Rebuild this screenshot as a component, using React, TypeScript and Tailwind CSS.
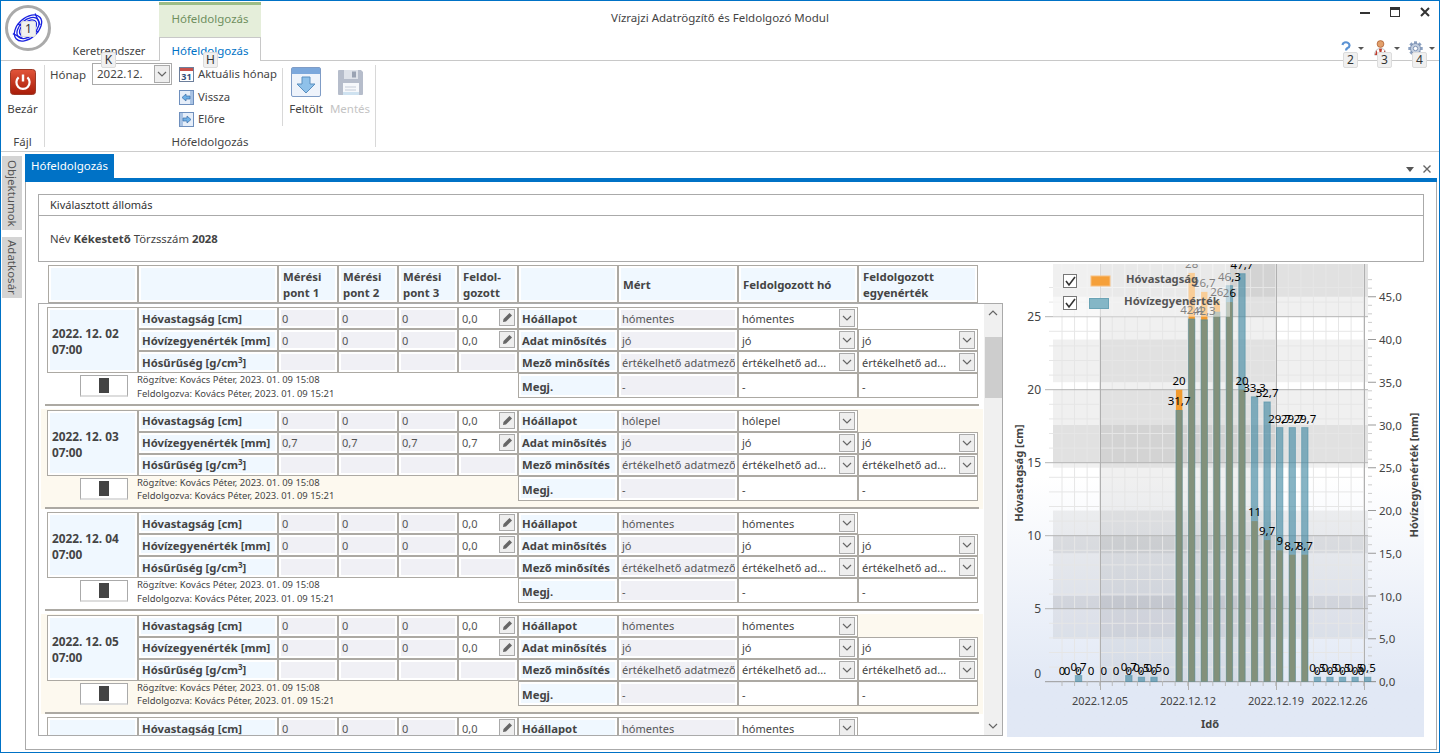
import React from 'react';

const F = "font-['Open_Sans',sans-serif]";

function KeyTip({ t, cls }: { t: string; cls: string }) {
  return (
    <div className={`absolute z-20 w-[15px] h-[16px] bg-[#f0f0f0] border border-[#dcdcdc] rounded-[2px] flex items-center justify-center text-[12px] leading-none text-[#333] ${cls}`}>
      {t}
    </div>
  );
}

function Caret() {
  return <div className="w-0 h-0 border-l-[3px] border-r-[3px] border-t-[3px] border-l-transparent border-r-transparent border-t-[#555]" />;
}

function Chevron({ w = 10 }: { w?: number }) {
  return (
    <svg width={w} height={6} viewBox="0 0 10 6">
      <path d="M1 1 L5 5 L9 1" fill="none" stroke="#666" strokeWidth="1.2" />
    </svg>
  );
}

function Logo() {
  return (
    <svg width="46" height="46" viewBox="0 0 46 46">
      <circle cx="23" cy="23" r="21.5" fill="#fff" stroke="#aaaaaa" strokeWidth="3" />
      <g fill="none" stroke="#1a22e0" strokeWidth="1.3" transform="rotate(-42 23 23)">
        <ellipse cx="23" cy="23" rx="16" ry="10" />
        <ellipse cx="23" cy="23" rx="13" ry="8" />
        <ellipse cx="23" cy="23" rx="10" ry="6" />
        <path d="M8 17 L12 27 M38 17 L34 29 M18 13 L20 18 M28 33 L26 28" />
      </g>
    </svg>
  );
}

function PowerIcon() {
  return (
    <svg width="26" height="26" viewBox="0 0 26 26">
      <defs>
        <linearGradient id="pw" x1="0" y1="0" x2="0" y2="1">
          <stop offset="0" stopColor="#e2553a" />
          <stop offset="1" stopColor="#a81c08" />
        </linearGradient>
      </defs>
      <rect x="0.5" y="0.5" width="25" height="25" rx="3" fill="url(#pw)" stroke="#9c3a28" />
      <path d="M8.6 8.4 A6.6 6.6 0 1 0 17.4 8.4" fill="none" stroke="#fff" strokeWidth="2.2" />
      <path d="M13 5.5 V12.5" stroke="#fff" strokeWidth="2.4" />
    </svg>
  );
}

function CalendarIcon() {
  return (
    <svg width="15" height="15" viewBox="0 0 15 15">
      <rect x="0.5" y="0.5" width="14" height="14" fill="#fff" stroke="#6d7f9b" />
      <rect x="1" y="1" width="13" height="3" fill="#c9504a" />
      <text x="7.5" y="12.5" textAnchor="middle" fontSize="9" fontWeight="700" fill="#33507a">31</text>
    </svg>
  );
}

function ArrowBox({ dir }: { dir: 'l' | 'r' }) {
  return (
    <svg width="15" height="15" viewBox="0 0 15 15">
      <rect x="0.5" y="0.5" width="14" height="14" fill="#e6eef9" stroke="#6e8fbd" />
      {dir === 'l' ? (
        <>
          <rect x="11" y="1" width="3" height="13" fill="#a9c3e4" />
          <path d="M3 7.5 L7 4 V6 H11 V9 H7 V11 Z" fill="#6fb0e6" stroke="#3b6fa8" strokeWidth="0.7" />
        </>
      ) : (
        <>
          <rect x="1" y="1" width="3" height="13" fill="#a9c3e4" />
          <path d="M12 7.5 L8 4 V6 H4 V9 H8 V11 Z" fill="#6fb0e6" stroke="#3b6fa8" strokeWidth="0.7" />
        </>
      )}
    </svg>
  );
}

function UploadIcon() {
  return (
    <svg width="30" height="30" viewBox="0 0 30 30">
      <rect x="0.5" y="0.5" width="29" height="29" rx="1.5" fill="#eef3fb" stroke="#7f9cc6" />
      <rect x="1" y="1" width="28" height="6" fill="#7ca8dc" />
      <path d="M11 10 H19 V17 H24 L15 26 L6 17 H11 Z" fill="#8fc1ea" stroke="#5b8fbf" strokeWidth="1" />
    </svg>
  );
}

function SaveIcon() {
  return (
    <svg width="27" height="27" viewBox="0 0 27 27">
      <path d="M1 2 a1 1 0 0 1 1 -1 H24 l2 2 V25 a1 1 0 0 1 -1 1 H2 a1 1 0 0 1 -1 -1 Z" fill="#b6bdcb" />
      <rect x="7" y="1" width="14" height="9" fill="#dfe3ea" />
      <rect x="15" y="2.5" width="4" height="6" fill="#9aa3b3" />
      <rect x="6" y="14" width="16" height="12" fill="#f6f8fb" />
      <path d="M8 18 H19 M8 21 H19" stroke="#c5ccd8" />
      <rect x="6" y="23" width="16" height="3" fill="#cfe2f0" />
    </svg>
  );
}

function HelpIcon() {
  return (
    <svg width="12" height="14" viewBox="0 0 12 14">
      <path d="M2.5 4 A3.5 3 0 1 1 7.5 7 Q6 8 6 9.5" fill="none" stroke="#5b93d4" strokeWidth="2.2" />
      <circle cx="6" cy="12.4" r="1.4" fill="#5b93d4" />
    </svg>
  );
}

function PersonIcon() {
  return (
    <svg width="13" height="16" viewBox="0 0 13 16">
      <circle cx="6.5" cy="4" r="3.4" fill="#e2a06b" stroke="#a8562a" strokeWidth="0.7" />
      <path d="M0.5 15 Q1 8.5 6.5 8.5 Q12 8.5 12.5 15 Z" fill="#fff" stroke="#999" strokeWidth="0.6" />
      <path d="M5 8.7 H8 L7 15 H6 Z" fill="#c0392b" />
      <path d="M1 15 L2.5 10 L4 15 Z M12 15 L10.5 10 L9 15 Z" fill="#c0392b" />
    </svg>
  );
}

function GearIcon() {
  const teeth = [0, 45, 90, 135, 180, 225, 270, 315];
  return (
    <svg width="15" height="15" viewBox="0 0 15 15">
      {teeth.map((a) => (
        <rect key={a} x="6" y="0.3" width="3" height="3" fill="#8aa0c0" transform={`rotate(${a} 7.5 7.5)`} />
      ))}
      <circle cx="7.5" cy="7.5" r="5" fill="#c3cfe0" stroke="#7f93b3" />
      <circle cx="7.5" cy="7.5" r="2.2" fill="#fff" stroke="#7f93b3" />
    </svg>
  );
}

function PencilBtn() {
  return (
    <div className="absolute right-[2px] top-[1px] w-[16px] h-[17px] bg-[#eeeeee] border border-[#aaaaaa] flex items-center justify-center">
      <svg width="11" height="11" viewBox="0 0 11 11">
        <path d="M7.5 1 L10 3.5 L4 9.5 L1 10 L1.5 7 Z" fill="#666" />
      </svg>
    </div>
  );
}

const cell = 'border border-[#aca9a3] bg-white p-[2px] min-w-0 overflow-hidden';

function Label({ children, cls = '', pt = 'pt-[2px]' }: { children: React.ReactNode; cls?: string; pt?: string }) {
  return (
    <div className={`${cell} ${cls}`}>
      <div className={`h-full bg-[#f0f8ff] pl-[1px] ${pt} flex items-center font-bold text-[#444] text-[11.3px] whitespace-nowrap`}>{children}</div>
    </div>
  );
}

function Val({ v, pt = 'pt-[2px]' }: { v?: string; pt?: string }) {
  return (
    <div className={cell}>
      <div className={`h-full bg-[#f0f0f5] pl-[1px] ${pt} flex items-center text-[#555] whitespace-nowrap overflow-hidden`}>{v}</div>
    </div>
  );
}

function Proc({ v }: { v: string }) {
  return (
    <div className={`${cell} relative`}>
      <div className="h-full pl-[1px] pt-[2px] flex items-center text-[#555]">{v}</div>
      <PencilBtn />
    </div>
  );
}

function Combo({ v }: { v: string }) {
  return (
    <div className={`${cell} relative`}>
      <div className="h-full pl-[1px] pt-[2px] flex items-center text-[#444] whitespace-nowrap">{v}</div>
      <div className="absolute right-[2px] top-[1px] w-[16px] h-[18px] bg-[#eeeeee] border border-[#aaaaaa] flex items-center justify-center">
        <Chevron />
      </div>
    </div>
  );
}

function Plain({ v }: { v: string }) {
  return (
    <div className={cell}>
      <div className="h-full pl-[1px] pt-[4px] flex items-center text-[#444]">{v}</div>
    </div>
  );
}

const rows = [
  { d: '2022. 12. 02', s: 'hómentes', w: '0', p: '0,0' },
  { d: '2022. 12. 03', s: 'hólepel', w: '0,7', p: '0,7' },
  { d: '2022. 12. 04', s: 'hómentes', w: '0', p: '0,0' },
  { d: '2022. 12. 05', s: 'hómentes', w: '0', p: '0,0' },
  { d: '2022. 12. 06', s: 'hómentes', w: '0', p: '0,0' },
];

function DataRow({ r, tint }: { r: (typeof rows)[number]; tint: boolean }) {
  return (
    <div className={`ml-[2px] mr-[1px] mb-[2.5px] h-[100px] pt-[1px] shrink-0 ${tint ? 'bg-[#fdf9ef]' : ''}`}>
      <div className="ml-[6px] w-[931px] grid grid-cols-[91px_140px_60px_60px_60px_60px_100px_120px_120px_120px] grid-rows-[22px_22px_22px_25px]">
        <div className={`${cell} row-span-3`}>
          <div className="h-full bg-[#f0f8ff] pl-[2px] pt-[2px] flex items-center font-bold text-[11.8px] text-[#444] leading-[16px]">
            <div>{r.d}<br />07:00</div>
          </div>
        </div>
        <Label>Hóvastagság [cm]</Label>
        <Val v="0" /><Val v="0" /><Val v="0" />
        <Proc v="0,0" />
        <Label>Hóállapot</Label>
        <Val v={r.s} />
        <Combo v={r.s} />
        <div />

        <Label>Hóvízegyenérték [mm]</Label>
        <Val v={r.w} /><Val v={r.w} /><Val v={r.w} />
        <Proc v={r.p} />
        <Label>Adat minősítés</Label>
        <Val v="jó" />
        <Combo v="jó" />
        <Combo v="jó" />

        <Label><span>Hósűrűség [g/cm<sup className="text-[8px]">3</sup>]</span></Label>
        <Val /><Val /><Val /><Val />
        <Label>Mező minősítés</Label>
        <Val v="értékelhető adatmező" />
        <Combo v="értékelhető ad..." />
        <Combo v="értékelhető ad..." />

        <div className="pt-[2px] pl-[33px]">
          <div className="w-[48px] h-[22px] bg-white border border-[#aaaaaa] border-b-[2px] border-b-[#dddddd] flex justify-center pt-[2px]">
            <div className="w-[10px] h-[15px] bg-[#444]" />
          </div>
        </div>
        <div className="col-span-5 -ml-[1px] text-[9.45px] leading-[13.5px] text-[#444] whitespace-nowrap">
          <div>Rögzítve: Kovács Péter, 2023. 01. 09 15:08</div>
          <div>Feldolgozva: Kovács Péter, 2023. 01. 09 15:21</div>
        </div>
        <Label pt="pt-[4px]">Megj.</Label>
        <Val v="-" pt="pt-[4px]" />
        <Plain v="-" />
        <Plain v="-" />
      </div>
      <div className="mt-[6px] mx-[4px] h-[2px] bg-[#aca9a3]" />
    </div>
  );
}

function HeadCell({ children, cls = '' }: { children?: React.ReactNode; cls?: string }) {
  return (
    <div className={`${cell} ${cls}`}>
      <div className="h-full bg-[#f0f8ff] pl-[2px] pt-[2px] flex items-center font-bold text-[11.4px] text-[#444] leading-[16px]">{children}</div>
    </div>
  );
}

function Chart() {
  const yL = (v: number) => 681.7 - 14.6 * v;
  const yR = (v: number) => 681.5 - 8.55 * v;
  const xD = (d: number) => 1103.7 + 12.57 * (d - 5);
  const PL = 1053;
  const PR = 1364;
  const band = 'rgba(0,0,0,0.06)';
  const orange = [
    [11, 20], [12, 28], [13, 26.7], [14, 26.1], [15, 26], [16, 20], [17, 11], [18, 9.7], [19, 9], [20, 8.7], [21, 8.7],
  ];
  const orangeL = ['20', '28', '26,7', '26', '26', '20', '11', '9,7', '9', '8,7', '8,7'];
  const blue = [
    [3, 0.7], [7, 0.7], [8, 0.5], [9, 0.5],
    [11, 31.7], [12, 42.4], [13, 42.3], [14, 43.2], [15, 46.3], [16, 47.7], [17, 33.3], [18, 32.7], [19, 29.7], [20, 29.7], [21, 29.7],
    [22, 0.5], [23, 0.5], [24, 0.5], [25, 0.5], [26, 0.5],
  ];
  const blueL: Record<number, string> = {
    3: '0,7', 7: '0,7', 8: '0,5', 9: '0,5', 11: '31,7', 12: '42,4', 13: '42,3', 15: '46,3', 16: '47,7', 17: '33,3', 18: '32,7',
    19: '29,7', 20: '29,7', 21: '29,7', 22: '0,5', 23: '0,5', 24: '0,5', 25: '0,5', 26: '0,5',
  };
  const zeros = [1062, 1067, 1078.6, 1091, 1103.7, 1116, 1128.8, 1141, 1154, 1166, 1317.4, 1330, 1342.5, 1355, 1361];
  const days = Array.from({ length: 25 }, (_, i) => 1062 + 12.57 * i);
  return (
    <div className="w-[417px] h-[473px] shrink-0 bg-linear-to-b from-white from-[45%] to-[#e1e8f5] to-[90%]">
      <svg width="417" height="473" viewBox="1007 264 417 473" className="block">
        {[45, 35, 25, 15, 5].map((v) => (
          <rect key={v} x={PL} y={yR(v + 5)} width={PR + 4 - PL} height={yR(v) - yR(v + 5)} fill={band} />
        ))}
        {[25, 15, 5].map((v) => (
          <rect key={v} x={PL} y={yL(v + 5)} width={PR + 4 - PL} height={yL(v) - yL(v + 5)} fill={band} />
        ))}
        <rect x={1100} y={264} width={176} height={417.5} fill={band} />
        {Array.from({ length: 28 }, (_, i) => i).filter((v) => v % 5 !== 0).map((v) => (
          <path key={v} d={`M1049 ${yL(v)} H${PR}`} stroke="#e6e6e6" />
        ))}
        {days.map((x, i) => (
          <path key={i} d={`M${x} 264 V681`} stroke="#e6e6e6" />
        ))}
        {[5, 10, 15, 20, 25].map((v) => (
          <path key={v} d={`M1045 ${yL(v)} H1368`} stroke="#b4b4b4" />
        ))}
        <path d="M1100.5 264 V690 M1276.5 264 V690 M1188.5 681 V690 M1364.5 264 V690" stroke="#b0b0b0" />
        <path d={`M1045 ${yL(0)} H1376`} stroke="#999" />
        {days.map((x, i) => (
          <path key={i} d={`M${x} 681 V686`} stroke="#bbb" />
        ))}
        {Array.from({ length: 10 }, (_, i) => i * 5).map((v) => (
          <g key={v}>
            <path d={`M1368 ${yR(v)} H1376`} stroke="#999" />
            <text x="1379" y={yR(v) + 4.5} fontSize="11.5" fill="#444">{`${v},0`}</text>
          </g>
        ))}
        {Array.from({ length: 48 }, (_, i) => i).filter((v) => v % 5 !== 0).map((v) => (
          <path key={v} d={`M1368 ${yR(v)} H1372`} stroke="#ccc" />
        ))}
        {[0, 5, 10, 15, 20, 25].map((v) => (
          <text key={v} x="1041" y={yL(v) + (v === 0 ? -4 : 4.5)} textAnchor="end" fontSize="12" fill="#444">{v}</text>
        ))}
        {orange.map(([d, v]) => (
          <rect key={d} x={xD(d) - 3.2} y={yL(v)} width={6.4} height={yL(0) - yL(v)} fill="#f29b2f" />
        ))}
        {blue.map(([d, v]) => (
          <rect key={d} x={xD(d) - 3.2} y={yR(v)} width={6.4} height={yR(0) - yR(v)} fill="rgba(70,140,165,0.65)" stroke="rgba(70,140,165,0.5)" />
        ))}
        {zeros.map((x, i) => (
          <text key={i} x={x} y={675} textAnchor="middle" fontSize="11.5" fill="#000">0</text>
        ))}
        {orange.map(([d, v], i) => (
          <text key={d} x={xD(d)} y={yL(v) - 5} textAnchor="middle" fontSize="11.5" fill="#000">{orangeL[i]}</text>
        ))}
        {Object.entries(blueL).map(([d, l]) => {
          const dn = Number(d);
          const v = blue.find((b) => b[0] === dn)![1];
          return (
            <text key={d} x={xD(dn)} y={yR(v) - 5} textAnchor="middle" fontSize="11.5" fill="#000">{l}</text>
          );
        })}
        <rect x={PL} y={264} width={177} height={52.7} fill="rgba(255,255,255,0.5)" />
        <rect x="1063.5" y="274.5" width="13" height="13" fill="#fff" stroke="#777" />
        <path d="M1066 281 L1069 285 L1075 277" fill="none" stroke="#333" strokeWidth="1.6" />
        <rect x="1091" y="276" width="19" height="10" fill="#f5a03a" stroke="#f8c080" />
        <text x="1126" y="283" fontSize="11.2" fontWeight="700" fill="#555">Hóvastagság</text>
        <rect x="1063.5" y="296.5" width="13" height="13" fill="#fff" stroke="#777" />
        <path d="M1066 303 L1069 307 L1075 299" fill="none" stroke="#333" strokeWidth="1.6" />
        <rect x="1089.5" y="298.5" width="19" height="10" fill="#84b6c6" stroke="#6aa3b5" />
        <text x="1124" y="305" fontSize="11.3" fontWeight="700" fill="#555">Hóvízegyenérték</text>
        {[1100, 1188, 1276, 1339.5].map((x, i) => (
          <text key={x} x={x} y={705} textAnchor="middle" fontSize="11" fill="#444">{['2022.12.05', '2022.12.12', '2022.12.19', '2022.12.26'][i]}</text>
        ))}
        <text x="1210" y="728" textAnchor="middle" fontSize="11" fontWeight="700" fill="#444">Idő</text>
        <text transform="translate(1023 473) rotate(-90)" textAnchor="middle" fontSize="11" fontWeight="700" fill="#444">Hóvastagság [cm]</text>
        <text transform="translate(1418 475) rotate(-90)" textAnchor="middle" fontSize="11" fontWeight="700" fill="#444">Hóvízegyenérték [mm]</text>
      </svg>
    </div>
  );
}

export default function App() {
  return (
    <div className={`${F} relative w-[1440px] h-[753px] border border-[#0072c6] bg-white text-[11px] text-[#444] overflow-hidden flex flex-col`}>
      {/* title + tabs */}
      <div className="h-[60px] shrink-0 border-b border-[#c8c8c8] flex relative">
        <div className="w-[260px] shrink-0 flex">
          <div className="w-[58px] pt-[4px] pl-[4px] relative">
            <Logo />
          </div>
          <div className="w-[100px] flex items-end justify-center text-[11px] leading-[18px]">Keretrendszer</div>
          <div className="w-[102px] flex flex-col">
            <div className="mt-[1px] h-[36px] bg-[#e5eeda] border-t-[3px] border-[#9dbd87] pt-[5px] text-center text-[#6f8f5e] text-[11.5px]">Hófeldolgozás</div>
            <div className="h-[24px] -mb-[1px] bg-white border border-b-0 border-[#c8c8c8] pt-[2px] flex items-center justify-center text-[#0072c6] text-[11.5px] relative z-10">Hófeldolgozás</div>
          </div>
        </div>
        <div className="flex-1 text-center pt-[8px] text-[11.5px] leading-[18px]">Vízrajzi Adatrögzítő és Feldolgozó Modul</div>
        <div className="w-[260px] shrink-0 flex flex-col items-end pr-[4px]">
          <div className="flex items-center h-[14px] mt-[4px] pr-[5px]">
            <div className="w-[10px] h-[2px] bg-[#333] mt-[1px] mr-px" />
            <div className="ml-[19px] w-[10px] h-[10px] border border-[#333] border-t-[3px]" />
            <svg className="ml-[20px]" width="10" height="10" viewBox="0 0 10 10"><path d="M1 1 L9 9 M9 1 L1 9" stroke="#333" strokeWidth="2" /></svg>
          </div>
          <div className="flex items-center mt-[21px] h-[16px]">
            <HelpIcon />
            <div className="ml-[6px] mr-[10px]"><Caret /></div>
            <PersonIcon />
            <div className="ml-[7px] mr-[8px]"><Caret /></div>
            <GearIcon />
            <div className="ml-[6px]"><Caret /></div>
          </div>
        </div>
      </div>
      <KeyTip t="1" cls="left-[20px] top-[20px]" />
      <KeyTip t="K" cls="left-[100px] top-[51px]" />
      <KeyTip t="H" cls="left-[202px] top-[51px]" />
      <KeyTip t="2" cls="left-[1342px] top-[51px]" />
      <KeyTip t="3" cls="left-[1376px] top-[51px]" />
      <KeyTip t="4" cls="left-[1411px] top-[51px]" />

      {/* ribbon */}
      <div className="h-[91px] shrink-0 border-b border-[#cccccc] pt-[4px] flex text-[11.5px]">
        <div className="w-[44px] h-[82px] border-r border-[#d8d8d8] flex flex-col items-center">
          <div className="mt-[4px] h-[26px]"><PowerIcon /></div>
          <div className="mt-[6px] leading-[16px]">Bezár</div>
          <div className="mt-auto -mb-[2px] leading-[14px]">Fájl</div>
        </div>
        <div className="w-[331px] h-[82px] border-r border-[#d8d8d8] flex flex-col">
          <div className="flex h-[68px]">
            <div className="w-[47px] pl-[5px] -mt-[1px] leading-[22px]">Hónap</div>
            <div className="w-[80px] h-[22px] -mt-[2px] border border-[#aaaaaa] pl-[4px] flex items-center justify-between pr-[1px]">
              <span>2022.12.</span>
              <div className="w-[16px] h-[18px] bg-[#eeeeee] border border-[#aaaaaa] flex items-center justify-center"><Chevron /></div>
            </div>
            <div className="ml-[7px] w-[103px] -mt-[2px] flex flex-col text-[11.3px]">
              <div className="h-[23px] flex items-center gap-[4px]"><CalendarIcon />Aktuális hónap</div>
              <div className="h-[22.5px] flex items-center gap-[4px]"><ArrowBox dir="l" />Vissza</div>
              <div className="h-[22.5px] flex items-center gap-[4px]"><ArrowBox dir="r" />Előre</div>
            </div>
            <div className="w-px h-[58px] mt-[3px] bg-[#d8d8d8]" />
            <div className="w-[46px] flex flex-col items-center">
              <div className="mt-[2px] h-[30px]"><UploadIcon /></div>
              <div className="mt-[4px] leading-[16px]">Feltölt</div>
            </div>
            <div className="w-[42px] flex flex-col items-center text-[#c4c4c4]">
              <div className="mt-[4px] h-[27px]"><SaveIcon /></div>
              <div className="mt-[5px] leading-[16px]">Mentés</div>
            </div>
          </div>
          <div className="mt-auto -mb-[2px] leading-[14px] text-center">Hófeldolgozás</div>
        </div>
      </div>

      {/* document area */}
      <div className="flex-1 flex min-h-0">
        <div className="w-[24px] shrink-0 pl-px pt-[4px] text-[#555] text-[11.5px]">
          <div className="w-[20px] h-[74px] bg-[#d4d4d4] flex items-center justify-center [writing-mode:vertical-rl]">Objektumok</div>
          <div className="mt-[7px] w-[20px] h-[61px] bg-[#d4d4d4] flex items-center justify-center [writing-mode:vertical-rl]">Adatkosár</div>
        </div>
        <div className="flex-1 min-w-0 mr-[2px] mb-[2px] flex flex-col">
          <div className="h-[26px] shrink-0 flex items-end justify-between pr-[6px]">
            <div className="w-[89px] h-[24px] bg-[#0072c6] text-white text-[11.5px] flex items-center justify-center">Hófeldolgozás</div>
            <div className="flex items-center gap-[9px] pb-[5px]">
              <div className="w-0 h-0 border-l-[4px] border-r-[4px] border-t-[5px] border-l-transparent border-r-transparent border-t-[#555]" />
              <svg width="8" height="8" viewBox="0 0 8 8"><path d="M0.5 0.5 L7.5 7.5 M7.5 0.5 L0.5 7.5" stroke="#666" strokeWidth="1.4" /></svg>
            </div>
          </div>
          <div className="h-[4px] shrink-0 bg-[#0072c6]" />
          <div className="flex-1 min-h-0 border-l border-r border-b border-[#aaaaaa] pl-[12px] pt-[12px]">
            <div className="w-[1386px] h-[68px] border border-[#aaaaaa]">
              <div className="h-[21px] border-b border-[#aaaaaa] pl-[11px] flex items-center text-[#333]">Kiválasztott állomás</div>
              <div className="h-[45px] pl-[11px] pt-[2px] flex items-center text-[11.3px] text-[#444] whitespace-pre">Név <b>Kékestető</b> Törzsszám <b>2028</b></div>
            </div>
            <div className="mt-[2px] flex gap-[4px]">
              <div className="w-[965px] h-[472px] pt-[1px] flex flex-col">
                <div className="ml-[10px] h-[38px] shrink-0 w-[930px] grid grid-cols-[90px_140px_60px_60px_60px_60px_100px_120px_120px_120px]">
                  <HeadCell /><HeadCell />
                  <HeadCell><div>Mérési<br />pont 1</div></HeadCell>
                  <HeadCell><div>Mérési<br />pont 2</div></HeadCell>
                  <HeadCell><div>Mérési<br />pont 3</div></HeadCell>
                  <HeadCell><div>Feldol-<br />gozott</div></HeadCell>
                  <HeadCell />
                  <HeadCell>Mért</HeadCell>
                  <HeadCell>Feldolgozott hó</HeadCell>
                  <HeadCell><div>Feldolgozott<br />egyenérték</div></HeadCell>
                </div>
                <div className="flex-1 min-h-0 border border-[#aaaaaa] flex">
                  <div className="flex-1 min-w-0 pt-[2px] overflow-hidden flex flex-col">
                    {rows.map((r, i) => (
                      <DataRow key={r.d} r={r} tint={i % 2 === 1} />
                    ))}
                  </div>
                  <div className="w-[18px] shrink-0 bg-[#f0f0f0] flex flex-col items-center">
                    <div className="h-[33px] rotate-180 flex items-end justify-center pb-[6px]"><Chevron /></div>
                    <div className="w-[17px] h-[61px] bg-[#cdcdcd]" />
                    <div className="mt-auto pb-[6px]"><Chevron /></div>
                  </div>
                </div>
              </div>
              <Chart />
            </div>
          </div>
        </div>
      </div>
    </div>
  );
}
